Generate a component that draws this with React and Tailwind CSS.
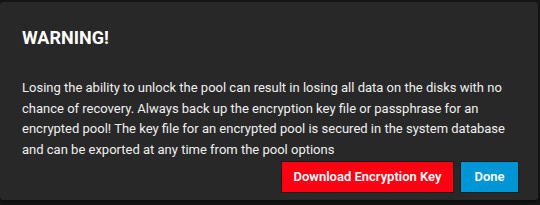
export default function App() {
  return (
    <div className="w-[540px] h-[205px] bg-[#161616] pt-[2px]" style={{ fontFamily: "Roboto, 'Noto Sans', sans-serif" }}>
      <div className="w-[538px] h-[198px] bg-[#282828] rounded-[3px] shadow-[0_2px_4px_rgba(0,0,0,0.6)] px-[22px] pt-[24px] flex flex-col">
        <h2 className="text-[18px] leading-[24px] font-bold text-white">WARNING!</h2>
        <p className="mt-[28px] text-[13px] leading-[20.5px] text-[#f0f0f0]">
          Losing the ability to unlock the pool can result in losing all data on the disks with no chance of recovery. Always back up the encryption key file or passphrase for an encrypted pool! The key file for an encrypted pool is secured in the system database and can be exported at any time from the pool options
        </p>
        <div className="mt-[1px] flex justify-end gap-[6px] mr-[-3px]">
          <button className="h-[32px] w-[173px] whitespace-nowrap bg-[#ff0013] border border-[#1c1c1c] text-white text-[13px] font-semibold">Download Encryption Key</button>
          <button className="h-[32px] w-[59px] whitespace-nowrap bg-[#0095d5] border border-[#1c1c1c] text-white text-[13px] font-semibold">Done</button>
        </div>
      </div>
    </div>
  );
}
